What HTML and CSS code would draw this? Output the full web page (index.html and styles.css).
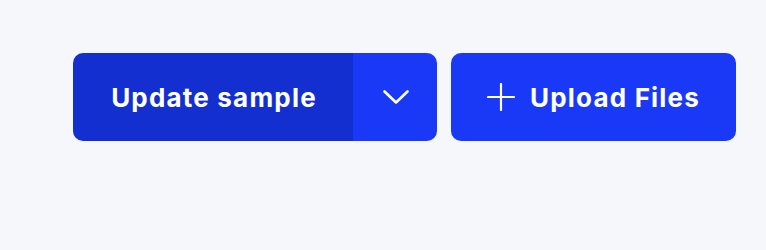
FILE: index.html
```html
<!DOCTYPE html>
<html>
<head>
<meta charset="utf-8">
<link rel="stylesheet" href="styles.css">
</head>
<body>
<div class="toolbar">
  <div class="split">
    <button class="split-main">Update sample</button>
    <button class="split-toggle" aria-label="More options">
      <svg width="26" height="14" viewBox="0 0 26 14" fill="none" stroke="#fff" stroke-width="2.6" stroke-linecap="round" stroke-linejoin="round"><path d="M1.5 1.5 L13 12.5 L24.5 1.5"/></svg>
    </button>
  </div>
  <button class="upload">
    <svg width="28" height="28" viewBox="0 0 28 28" fill="none" stroke="#fff" stroke-width="2.2" stroke-linecap="round"><path d="M14 1 V27 M1 14 H27"/></svg>
    <span>Upload Files</span>
  </button>
</div>
</body>
</html>
```

FILE: styles.css
```css
html, body {
  margin: 0;
  background: #f6f7fb;
}
body {
  padding: 53px 0 0 73px;
  font-family: Inter, "Noto Sans", sans-serif;
}
.toolbar {
  display: flex;
  gap: 14px;
}
button {
  font-family: inherit;
  border: none;
  margin: 0;
  color: #fff;
  font-weight: 700;
  font-size: 26px;
  letter-spacing: 1.2px;
  cursor: pointer;
}
.split {
  display: flex;
  height: 88px;
  border-radius: 10px;
  overflow: hidden;
}
.split-main {
  width: 280px;
  background: #132fcf;
  padding: 0;
  padding-left: 2px;
}
.split-toggle {
  width: 84px;
  background: #1a39f7;
  display: flex;
  align-items: center;
  justify-content: center;
  padding: 0;
  padding-left: 2px;
}
.upload {
  width: 285px;
  height: 88px;
  background: #1a39f7;
  border-radius: 10px;
  display: flex;
  align-items: center;
  justify-content: center;
  gap: 15px;
  padding: 0;
}
```
